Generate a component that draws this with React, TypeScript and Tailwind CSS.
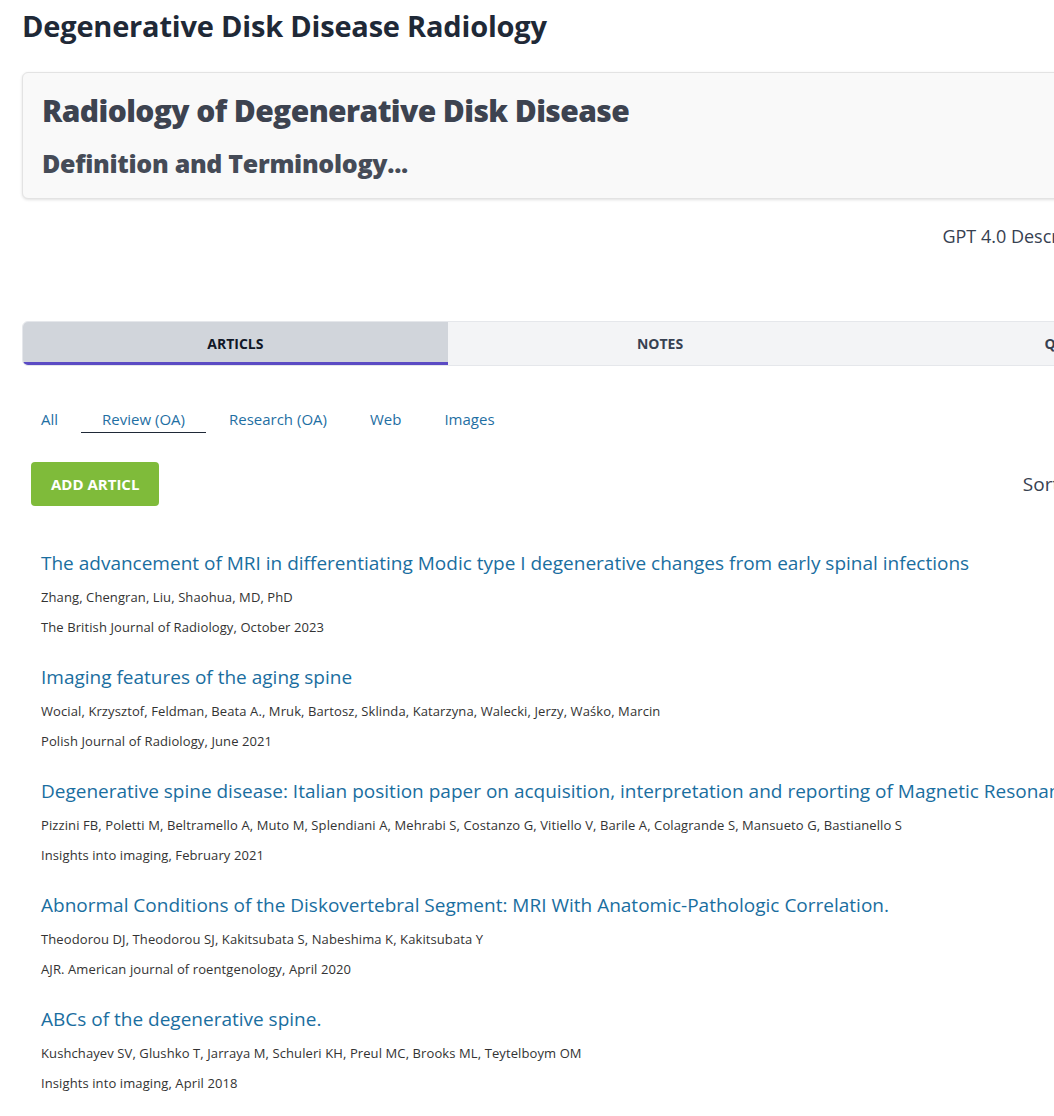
import React from "react";

const articles = [
  {
    title:
      "The advancement of MRI in differentiating Modic type I degenerative changes from early spinal infections",
    authors: "Zhang, Chengran, Liu, Shaohua, MD, PhD",
    journal: "The British Journal of Radiology, October 2023",
  },
  {
    title: "Imaging features of the aging spine",
    authors:
      "Wocial, Krzysztof, Feldman, Beata A., Mruk, Bartosz, Sklinda, Katarzyna, Walecki, Jerzy, Waśko, Marcin",
    journal: "Polish Journal of Radiology, June 2021",
  },
  {
    title:
      "Degenerative spine disease: Italian position paper on acquisition, interpretation and reporting of Magnetic Resonance Imaging of the lumbar spine",
    authors:
      "Pizzini FB, Poletti M, Beltramello A, Muto M, Splendiani A, Mehrabi S, Costanzo G, Vitiello V, Barile A, Colagrande S, Mansueto G, Bastianello S",
    journal: "Insights into imaging, February 2021",
  },
  {
    title:
      "Abnormal Conditions of the Diskovertebral Segment: MRI With Anatomic-Pathologic Correlation.",
    authors: "Theodorou DJ, Theodorou SJ, Kakitsubata S, Nabeshima K, Kakitsubata Y",
    journal: "AJR. American journal of roentgenology, April 2020",
  },
  {
    title: "ABCs of the degenerative spine.",
    authors:
      "Kushchayev SV, Glushko T, Jarraya M, Schuleri KH, Preul MC, Brooks ML, Teytelboym OM",
    journal: "Insights into imaging, April 2018",
  },
];

export default function App() {
  return (
    <div
      className="w-full overflow-hidden bg-white min-h-[1116px]"
      style={{ fontFamily: '"Open Sans", "Noto Sans", sans-serif' }}
    >
      <div className="w-[1320px] pl-[22px] pt-[8px]">
        <h1 className="text-[29px] leading-[36px] font-bold text-[#1f2937] tracking-[-0.2px]">
          Degenerative Disk Disease Radiology
        </h1>

        <div className="w-[1276px] mt-[28px] rounded-md border border-[#e3e3e3] bg-[#f9f9f9] shadow-[0_1px_3px_rgba(0,0,0,0.12)] pl-[19px] pr-5 pt-[19px] pb-[20px]">
          <h2 className="text-[30px] leading-[38px] font-extrabold text-[#3d4350] tracking-[-0.6px]">
            Radiology of Degenerative Disk Disease
          </h2>
          <p className="mt-[18px] text-[25px] leading-[30px] font-extrabold text-[#454b57] tracking-[-0.3px]">
            Definition and Terminology...
          </p>
        </div>

        <div className="w-[1276px] flex justify-end mt-[25px] pr-[191px]">
          <span className="text-[18px] leading-[24px] text-[#374151]">
            GPT 4.0 Description
          </span>
        </div>

        <div className="w-[1276px] mt-[73px] flex rounded-md border border-[#e5e7eb] bg-[#f3f4f6] overflow-hidden">
          <div className="flex-1 h-[43px] flex items-center justify-center bg-[#d1d5db] border-b-[3px] border-[#5b4bc4] text-[14px] font-bold text-[#111827] pt-[3px]">
            ARTICLS
          </div>
          <div className="flex-1 h-[43px] flex items-center justify-center text-[14px] font-bold text-[#374151]">
            NOTES
          </div>
          <div className="flex-1 h-[43px] flex items-center justify-center text-[14px] font-bold text-[#374151]">
            QUESTIONS
          </div>
        </div>

        <div className="mt-[41px] flex items-end gap-[23px] pl-[19px] text-[15px] text-[#1f6fa3]">
          <span className="leading-[24px] pb-[2px]">All</span>
          <span className="leading-[24px] px-[21px] pb-[1px] border-b border-[#1f2937]">
            Review (OA)
          </span>
          <span className="leading-[24px] pb-[2px]">Research (OA)</span>
          <span className="leading-[24px] pb-[2px] ml-[20px]">Web</span>
          <span className="leading-[24px] pb-[2px] ml-[20px]">Images</span>
        </div>

        <div className="w-[1276px] mt-[29px] flex items-center justify-between pl-[9px]">
          <button className="h-[44px] px-[20px] rounded-[4px] bg-[#7fbb3a] text-white text-[15px] font-bold">
            ADD ARTICL
          </button>
          <span className="text-[19px] text-[#374151] pr-[161px]">Sort by: Date</span>
        </div>

        <div className="mt-[43px] pl-[19px] flex flex-col gap-[26px]">
          {articles.map((a) => (
            <div key={a.title} className="flex flex-col">
              <a className="whitespace-nowrap text-[19px] leading-[28px] text-[#1a6e9f]">
                {a.title}
              </a>
              <span className="mt-[10px] whitespace-nowrap text-[13px] leading-[20px] text-[#333333] tracking-[0.1px]">
                {a.authors}
              </span>
              <span className="mt-[10px] whitespace-nowrap text-[13px] leading-[20px] text-[#333333] tracking-[0.1px]">
                {a.journal}
              </span>
            </div>
          ))}
        </div>
      </div>
    </div>
  );
}
